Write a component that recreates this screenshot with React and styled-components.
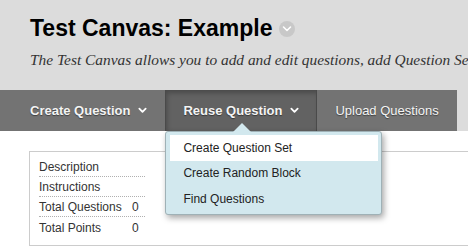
import styled, {createGlobalStyle} from 'styled-components';

const GlobalStyle = createGlobalStyle`
  body {
    margin: 0;
    background: #ffffff;
    font-family: "Liberation Sans", Arial, sans-serif;
  }
`;

const Page = styled.div`
  width: 468px;
  height: 247px;
  overflow: hidden;
  background: #ffffff;
`;

const Header = styled.header`
  background: #dcdcdc;
`;

const TitleRow = styled.div`
  display: flex;
  align-items: center;
  gap: 7px;
  padding: 14px 30px 0;
`;

const Title = styled.h1`
  margin: 0;
  font-size: 23px;
  line-height: 28px;
  font-weight: bold;
  color: #000;
  white-space: nowrap;
`;

const CircleButton = styled.span`
  display: flex;
  align-items: center;
  justify-content: center;
  width: 16px;
  height: 16px;
  border-radius: 50%;
  background: #c8c8c8;
  margin-top: 1px;
`;

const Subtitle = styled.p`
  margin: 8px 0 0;
  padding: 0 0 20px 30px;
  font-family: "Liberation Serif", "Times New Roman", serif;
  font-style: italic;
  font-size: 15.4px;
  line-height: 20px;
  color: #333;
  white-space: nowrap;
  overflow: hidden;
`;

const NavBar = styled.nav`
  display: flex;
  width: fit-content;
  height: 41px;
  padding-left: 12px;
  background: #737373;
`;

const NavItem = styled.div`
  position: relative;
  display: flex;
  align-items: center;
  gap: 8px;
  padding: 0 18px;
  font-size: 13px;
  font-weight: ${p => (p.$bold ? 'bold' : 'normal')};
  color: #f4f4f4;
  text-shadow: 0 1px 1px rgba(0, 0, 0, 0.45);
  white-space: nowrap;
  background: ${p => (p.$active ? '#626262' : 'transparent')};
  box-shadow: ${p => (p.$active ? 'inset 1px 0 0 #4a4a4a, inset -1px 0 0 #4a4a4a, inset 2px 3px 5px rgba(0,0,0,0.25)' : 'none')};
`;

const Menu = styled.ul`
  position: absolute;
  top: 100%;
  left: 0;
  z-index: 5;
  width: 217px;
  box-sizing: border-box;
  margin: 0;
  padding: 3px 3px 2px 4px;
  list-style: none;
  background: #d2e8ee;
  border: 1px solid #9fb1b6;
  border-radius: 3px;
  box-shadow: 2px 3px 6px rgba(0, 0, 0, 0.35);
  text-shadow: none;
  font-weight: normal;

  &::before {
    content: "";
    position: absolute;
    top: -9px;
    left: 67px;
    border-left: 9px solid transparent;
    border-right: 9px solid transparent;
    border-bottom: 9px solid #d2e8ee;
  }
`;

const MenuItem = styled.li`
  height: 25.5px;
  display: flex;
  align-items: center;
  padding-left: 13px;
  font-size: 12px;
  color: #222;
  background: ${p => (p.$hover ? '#ffffff' : 'transparent')};
`;

const Content = styled.main`
  padding: 20px 0 0 29px;
`;

const InfoBox = styled.section`
  width: 600px;
  border: 1px solid #cccccc;
  padding: 5px 9px 8px;
`;

const InfoTable = styled.div`
  width: 106px;
`;

const InfoRow = styled.div`
  box-sizing: border-box;
  display: flex;
  align-items: center;
  height: 20px;
  padding-top: 1px;
  border-bottom: ${p => (p.$last ? 'none' : '1px dotted #b0b0b0')};
  font-size: 12px;
  color: #333;
`;

const Label = styled.span`
  width: 93px;
  white-space: nowrap;
`;

const Value = styled.span``;

const Chevron = ({color = '#fff', size = 9, width = 2}) => (
  <svg width={size} height={size} viewBox="0 0 10 10">
    <polyline points="1.5,3 5,6.5 8.5,3" fill="none" stroke={color} strokeWidth={width} strokeLinecap="round" strokeLinejoin="round" />
  </svg>
);

const rows = [
  {label: 'Description', value: ''},
  {label: 'Instructions', value: ''},
  {label: 'Total Questions', value: '0'},
  {label: 'Total Points', value: '0'},
];

const App = () => (
  <Page>
    <GlobalStyle />
    <Header>
      <TitleRow>
        <Title>Test Canvas: Example</Title>
        <CircleButton>
          <Chevron size={10} width={1.6} />
        </CircleButton>
      </TitleRow>
      <Subtitle>The Test Canvas allows you to add and edit questions, add Question Sets and Random Blocks</Subtitle>
      <NavBar>
        <NavItem $bold>
          Create Question <Chevron />
        </NavItem>
        <NavItem $bold $active>
          Reuse Question <Chevron />
          <Menu>
            <MenuItem $hover>Create Question Set</MenuItem>
            <MenuItem>Create Random Block</MenuItem>
            <MenuItem>Find Questions</MenuItem>
          </Menu>
        </NavItem>
        <NavItem>Upload Questions</NavItem>
      </NavBar>
    </Header>
    <Content>
      <InfoBox>
        <InfoTable>
          {rows.map((r, i) => (
            <InfoRow key={r.label} $last={i === rows.length - 1}>
              <Label>{r.label}</Label>
              <Value>{r.value}</Value>
            </InfoRow>
          ))}
        </InfoTable>
      </InfoBox>
    </Content>
  </Page>
);

export default App;
